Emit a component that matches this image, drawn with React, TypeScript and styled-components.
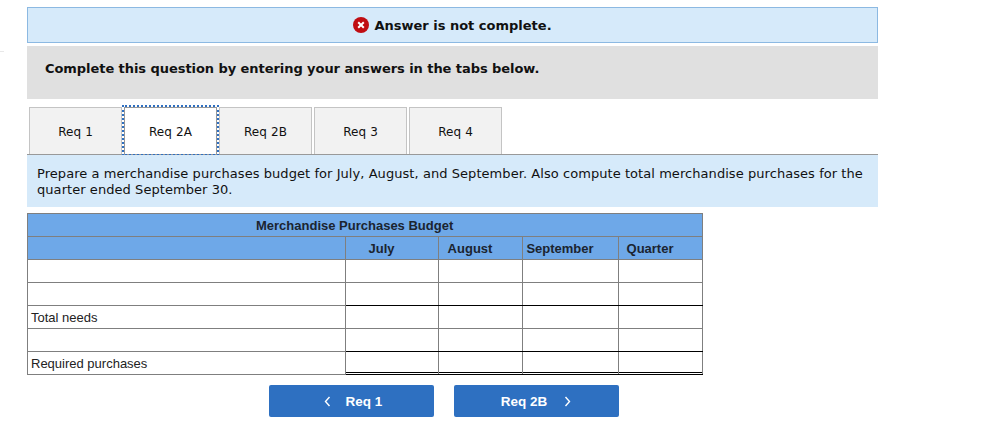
import React, { FC } from 'react';
import styled, { createGlobalStyle } from 'styled-components';

const GlobalStyle = createGlobalStyle`
    body {
        margin: 0;
        background: #fff;
        font-family: 'DejaVu Sans', Verdana, sans-serif;
        color: #111;
    }
`;

const Page = styled.div`
    width: 851px;
    margin-left: 27px;
    padding-top: 7px;
    display: flex;
    flex-direction: column;
`;

const EdgeTick = styled.div`
    position: absolute;
    left: 0;
    top: 51px;
    width: 4px;
    height: 1px;
    background: #e8e8e8;
`;

const AlertBar = styled.div`
    height: 36px;
    box-sizing: border-box;
    background: #d6eafa;
    border: 1px solid #8cb9e2;
    display: flex;
    align-items: center;
    justify-content: center;
    gap: 5px;
    font-size: 13px;
    font-weight: 700;
`;

const Prompt = styled.div`
    margin-top: 3px;
    height: 53px;
    box-sizing: border-box;
    background: #e0e0e0;
    padding: 15px 18px;
    font-size: 13px;
    letter-spacing: -0.06px;
    line-height: 16px;
    font-weight: 700;
`;

const TabStrip = styled.div`
    margin-top: 8px;
    height: 48px;
    box-sizing: border-box;
    display: flex;
    gap: 2px;
    padding-left: 2px;
    border-bottom: 1px solid #999;
`;

const Tab = styled.div<{ $active?: boolean }>`
    width: 93px;
    height: 47px;
    box-sizing: border-box;
    display: flex;
    align-items: center;
    justify-content: center;
    font-size: 12px;
    letter-spacing: 0.1px;
    padding-top: 1px;
    border: 1px solid #c4c4c4;
    border-bottom: 0;
    background: ${({ $active }) => ($active ? '#fff' : '#f2f2f2')};
    ${({ $active }) =>
        $active &&
        `
        outline: 2px dotted #2f6fc0;
        border-color: #999;
    `}
`;

const Instructions = styled.div`
    height: 52px;
    box-sizing: border-box;
    background: #d6eafa;
    padding: 11px 10px 0;
    font-size: 13px;
    letter-spacing: 0.06px;
    line-height: 16px;
`;

const Budget = styled.table`
    margin-top: 6px;
    width: 676px;
    table-layout: fixed;
    border-collapse: collapse;
    font-family: 'Liberation Sans', Arial, sans-serif;
    font-size: 13px;
`;

const HeadCell = styled.th<{ $title?: boolean }>`
    height: 23px;
    padding: 0 21px 0 0;
    box-sizing: border-box;
    background: #6ea8e8;
    border: 1px solid #7f7f7f;
    color: #1b2430;
    font-weight: 700;
    text-align: center;
    ${({ $title }) => $title && 'text-align: left; padding-left: 228px;'}
`;

const LabelCell = styled.td`
    height: 23px;
    padding: 0 3px;
    box-sizing: border-box;
    border: 1px solid #7f7f7f;
    color: #222;
`;

const InputCell = styled.td<{ $rule?: boolean; $double?: boolean }>`
    height: 23px;
    padding: 0;
    box-sizing: border-box;
    border: 1px solid #7f7f7f;
    ${({ $rule }) => $rule && 'border-bottom-color: #000;'}
    ${({ $double }) =>
        $double &&
        `
        border-bottom-color: #000;
        box-shadow: inset 0 -1px 0 #fff, inset 0 -2px 0 #000;
    `}
`;

const Footer = styled.div`
    margin-top: 10px;
    margin-left: 242px;
    display: flex;
    gap: 20px;
`;

const NavButton = styled.div<{ $next?: boolean }>`
    width: 165px;
    height: 32px;
    box-sizing: border-box;
    padding: ${({ $next }) => ($next ? '0 1px 0 0' : '0 0 0 3px')};
    background: #2e70c1;
    border-radius: 2px;
    color: #fff;
    font-family: 'Liberation Sans', Arial, sans-serif;
    font-size: 13.5px;
    font-weight: 700;
    display: flex;
    align-items: center;
    justify-content: center;
    gap: ${({ $next }) => ($next ? '17px' : '15px')};
`;

const ErrorIcon = () => (
    <svg width="16" height="16" viewBox="0 0 16 16">
        <circle cx="8" cy="8" r="8" fill="#c00d12" />
        <path d="M5.2 5.2l5.6 5.6M10.8 5.2l-5.6 5.6" stroke="#fff" strokeWidth="2" />
    </svg>
);

const Chevron: FC<{ d: string }> = ({ d }) => (
    <svg width="7" height="11" viewBox="0 0 7 11">
        <path d={d} fill="none" stroke="#fff" strokeWidth="1.4" />
    </svg>
);

const tabs = ['Req 1', 'Req 2A', 'Req 2B', 'Req 3', 'Req 4'];

// rule = black line under the figures of that row, double = closing double line
const rows = [
    { label: '', rule: false, double: false },
    { label: '', rule: true, double: false },
    { label: 'Total needs', rule: false, double: false },
    { label: '', rule: true, double: false },
    { label: 'Required purchases', rule: false, double: true },
];

export default function App() {
    return (
        <Page>
            <GlobalStyle />
            <EdgeTick />
            <AlertBar>
                <ErrorIcon />
                <span>Answer is not complete.</span>
            </AlertBar>
            <Prompt>Complete this question by entering your answers in the tabs below.</Prompt>
            <TabStrip>
                {tabs.map((tab) => (
                    <Tab key={tab} $active={tab === 'Req 2A'}>
                        {tab}
                    </Tab>
                ))}
            </TabStrip>
            <Instructions>
                Prepare a merchandise purchases budget for July, August, and September. Also compute total merchandise
                purchases for the quarter ended September 30.
            </Instructions>
            <Budget>
                <colgroup>
                    <col style={{ width: 318 }} />
                    <col style={{ width: 93 }} />
                    <col style={{ width: 84 }} />
                    <col style={{ width: 96 }} />
                    <col style={{ width: 84 }} />
                </colgroup>
                <thead>
                    <tr>
                        <HeadCell colSpan={5} $title>
                            Merchandise Purchases Budget
                        </HeadCell>
                    </tr>
                    <tr>
                        <HeadCell />
                        <HeadCell>July</HeadCell>
                        <HeadCell>August</HeadCell>
                        <HeadCell>September</HeadCell>
                        <HeadCell>Quarter</HeadCell>
                    </tr>
                </thead>
                <tbody>
                    {rows.map((row, i) => (
                        <tr key={i}>
                            <LabelCell>{row.label}</LabelCell>
                            {[0, 1, 2, 3].map((c) => (
                                <InputCell key={c} $rule={row.rule} $double={row.double} />
                            ))}
                        </tr>
                    ))}
                </tbody>
            </Budget>
            <Footer>
                <NavButton>
                    <Chevron d="M5.5 1L1.5 5.5L5.5 10" />
                    <span>Req 1</span>
                </NavButton>
                <NavButton $next>
                    <span>Req 2B</span>
                    <Chevron d="M1.5 1L5.5 5.5L1.5 10" />
                </NavButton>
            </Footer>
        </Page>
    );
}
